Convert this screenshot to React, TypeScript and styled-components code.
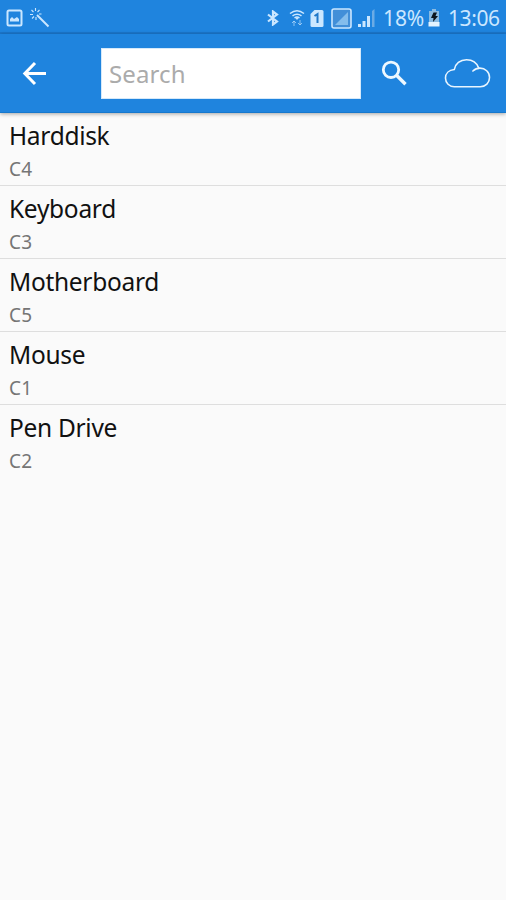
import React from "react";
import styled, { createGlobalStyle } from "styled-components";

const GlobalStyle = createGlobalStyle`
  * { box-sizing: border-box; }
  body { margin: 0; background: #fafafa; }
`;

const Screen = styled.div`
  width: 100%;
  min-height: 900px;
  display: flex;
  flex-direction: column;
  background: #fafafa;
  font-family: "Noto Sans", "Open Sans", sans-serif;
`;

const StatusBar = styled.div`
  height: 34px;
  display: flex;
  align-items: center;
  justify-content: space-between;
  padding: 4px 7px 0 6px;
  background: #1f84de;
  border-bottom: 2px solid #1b76cb;
  color: #cbe7ff;
`;

const Group = styled.div`
  display: flex;
  align-items: center;
`;

const Glyph = styled.svg<{ $gap?: number }>`
  display: block;
  flex: none;
  margin-left: ${(p) => p.$gap ?? 0}px;
`;

const StatusText = styled.span<{ $gap: number; $width: number; $spacing: number }>`
  margin-left: ${(p) => p.$gap}px;
  width: ${(p) => p.$width}px;
  font-size: 21px;
  line-height: 28px;
  letter-spacing: ${(p) => p.$spacing}px;
  white-space: nowrap;
`;

const Toolbar = styled.header`
  height: 79px;
  display: flex;
  align-items: center;
  padding: 0 15px 0 22px;
  background: #1f84de;
  border-bottom: 1px solid #1678cd;
  box-shadow: 0 1px 4px rgba(0, 0, 0, 0.35);
  z-index: 1;
`;

const IconButton = styled.button<{ $gap?: number }>`
  border: 0;
  padding: 0;
  background: none;
  margin-left: ${(p) => p.$gap ?? 0}px;
`;

const SearchInput = styled.input`
  width: 260px;
  height: 51px;
  margin-left: 54px;
  padding: 1px 8px 0 7px;
  border: 1px solid #d5e9fa;
  border-radius: 0;
  background: #fff;
  font: 24px "Noto Sans", sans-serif;
  letter-spacing: 0.1px;
  outline: 0;
  &::placeholder { color: #ababab; opacity: 1; }
`;

const List = styled.ul`
  margin: 0;
  padding: 0;
  list-style: none;
`;

const Row = styled.li`
  height: 73px;
  padding: 5px 9px 0 8px;
  border-bottom: 1px solid #dedede;
  &:last-child { border-bottom-color: transparent; }
`;

const Name = styled.div`
  height: 34px;
  padding-left: 1px;
  font-size: 24.5px;
  line-height: 35px;
  letter-spacing: -0.3px;
  color: #111;
`;

const Code = styled.div`
  height: 30px;
  padding-left: 1px;
  font-size: 19px;
  line-height: 34px;
  letter-spacing: 0.3px;
  color: #757575;
`;

const items = [
  { name: "Harddisk", code: "C4" },
  { name: "Keyboard", code: "C3" },
  { name: "Motherboard", code: "C5" },
  { name: "Mouse", code: "C1" },
  { name: "Pen Drive", code: "C2" },
];

const PictureIcon = () => (
  <Glyph width="17" height="18" viewBox="0 0 17 18">
    <rect x="1.5" y="1.5" width="14" height="15" rx="1.5" fill="none" stroke="currentColor" strokeWidth="2" />
    <path d="M4 12.5V10l2-2 2 2 3-2 2 2v2.500z" fill="currentColor" />
  </Glyph>
);

const WandIcon = () => (
  <Glyph $gap={7} width="20" height="20" viewBox="0 0 20 20" fill="none" stroke="currentColor">
    <path d="M7 7l11.500 11.500" strokeWidth="1.900" />
    <path d="M5.500 0v3M1.500 2l2 2M0 6.500h3M2 10.500l2-2M6 12V9M9.500 2l-2 2M11.500 6H9" strokeWidth="1.100" />
  </Glyph>
);

const BluetoothIcon = () => (
  <Glyph width="12" height="16" viewBox="0 0 12 16" fill="none" stroke="currentColor" strokeWidth="2.200">
    <path d="M1 4.500L10 11.500l-4 3V1.500l4 3-9 7" />
  </Glyph>
);

const WifiIcon = () => (
  <Glyph $gap={10} width="16" height="18" viewBox="0 0 16 18" fill="none" stroke="currentColor">
    <path d="M1 4.500Q8-1 15 4.500M3.500 6.800Q8 3.500 12.500 6.800M5.500 9Q8 7 10.500 9" strokeWidth="1.500" />
    <path d="M6 8.500h4L8 11z" fill="currentColor" stroke="none" />
    <path d="M5 17v-5M3 14l2-2 2 2M11 11v5M9 14l2 2 2-2" strokeWidth="1" opacity="0.650" />
  </Glyph>
);

const SimIcon = () => (
  <Glyph $gap={5} width="14" height="19" viewBox="0 0 14 19">
    <path d="M4.500 1H12q1.500 0 1.500 1.500v14Q13.500 18 12 18H2Q.5 18 .5 16.500V5z" fill="currentColor" />
    <path d="M4.500 7L7.500 5v9" fill="none" stroke="#1f78c9" strokeWidth="2" />
  </Glyph>
);

const RoamIcon = () => (
  <Glyph $gap={7} width="21" height="21" viewBox="0 0 21 21">
    <rect x="1" y="1" width="19" height="19" rx="2" fill="#428fd8" stroke="currentColor" strokeWidth="1.600" />
    <path d="M4 17L17 4v13z" fill="#84bdec" />
  </Glyph>
);

const SignalIcon = () => (
  <Glyph $gap={6} width="17" height="18" viewBox="0 0 17 18">
    <path d="M0 15h3v3H0zM4.500 12h3v6h-3zM9 7h3v11H9z" fill="currentColor" />
    <path d="M14 2l2.500-2v18H14z" fill="#6babe5" />
  </Glyph>
);

const BatteryIcon = () => (
  <Glyph $gap={3} width="12" height="18" viewBox="0 0 12 18">
    <path d="M4 0h4v2h3v11H1V2h3z" fill="#8abbe2" />
    <path d="M.5 13h11v4.500H.5z" fill="#e2f3ff" />
    <path d="M5.500 3.500H9L7.500 7H10l-5 6 .5-4H3z" fill="#0b151e" />
  </Glyph>
);

export default function App() {
  return (
    <Screen>
      <GlobalStyle />
      <StatusBar>
        <Group>
          <PictureIcon />
          <WandIcon />
        </Group>
        <Group>
          <BluetoothIcon />
          <WifiIcon />
          <SimIcon />
          <RoamIcon />
          <SignalIcon />
          <StatusText $gap={8} $width={42} $spacing={-0.1}>18%</StatusText>
          <BatteryIcon />
          <StatusText $gap={8} $width={51} $spacing={-0.4}>13:06</StatusText>
        </Group>
      </StatusBar>
      <Toolbar>
        <IconButton aria-label="Back">
          <Glyph width="25" height="25" viewBox="0 0 25 25" fill="none" stroke="#fff" strokeWidth="3">
            <path d="M13 2L2.800 12.500 13 23M3 12.500h21" />
          </Glyph>
        </IconButton>
        <SearchInput placeholder="Search" aria-label="Search" />
        <IconButton $gap={20} aria-label="Search">
          <Glyph width="27" height="27" viewBox="0 0 27 27" fill="none" stroke="#eef8ff">
            <circle cx="10" cy="9.800" r="7.700" strokeWidth="2.800" />
            <path d="M15.500 15.300l9 9" strokeWidth="3.400" />
          </Glyph>
        </IconButton>
        <IconButton $gap={36} aria-label="Sync">
          <Glyph width="47" height="31" viewBox="0 0 48 31" fill="none" stroke="#e8f5ff" strokeWidth="1.600" strokeLinecap="round" strokeLinejoin="round">
            <path d="M29.500 13C31.500 11 34 10 36.700 10c5.300 0 9.800 4 9.800 9.700C46.500 25 42.500 29 37 29H10.500c-5 0-9-3.800-9-8.800C1.500 15.500 5 12 10.500 11.500C11.500 5.500 16.500 1.500 23 1.500c5.500 0 10.500 3 12.500 8.500" />
          </Glyph>
        </IconButton>
      </Toolbar>
      <List>
        {items.map((item) => (
          <Row key={item.name}>
            <Name>{item.name}</Name>
            <Code>{item.code}</Code>
          </Row>
        ))}
      </List>
    </Screen>
  );
}
